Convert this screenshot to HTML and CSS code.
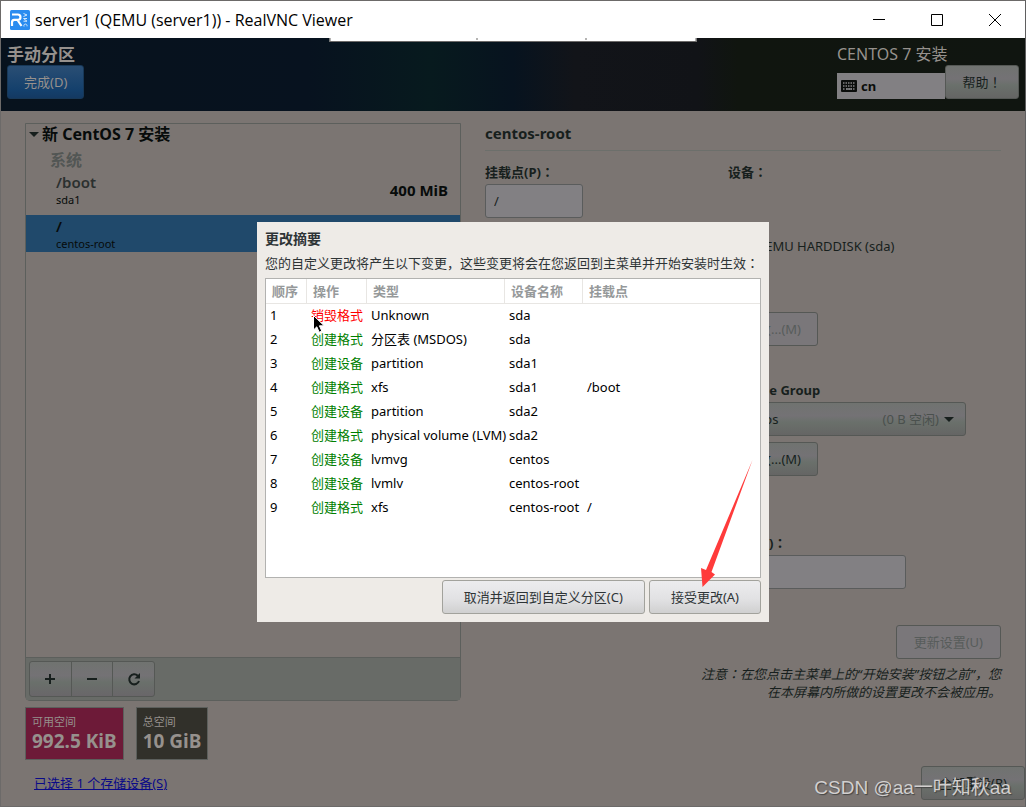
FILE: index.html
```html
<!DOCTYPE html>
<html lang="zh-CN">
<head>
<meta charset="utf-8">
<meta name="viewport" content="width=device-width, initial-scale=1">
<title>server1 (QEMU (server1)) - RealVNC Viewer</title>
<link rel="stylesheet" href="styles.css">
</head>
<body>
<div class="window">
  <header class="titlebar">
    <svg class="app-icon" viewBox="0 0 20 20" aria-hidden="true">
      <rect width="20" height="20" rx="1.5" fill="#2a8cf0"/>
      <path d="M2 4.500h5.800a2.600 2.600 0 0 1 0 5.300H4.200a2.500 2.500 0 0 0-2.200 2.500v3.700M7.500 10l4 6" fill="none" stroke="#fff" stroke-width="2.200"/>
      <path d="M13.500 3.500l3.500 1.500-3.500 1.500M17 8.500h-3.500l3.500 2.700h-3.500M14 16.500c-1-3 3.500-3.500 3-.2" fill="none" stroke="#d5e9fc" stroke-width="1"/>
    </svg>
    <span class="titlebar-text">server1 (QEMU (server1)) - RealVNC Viewer</span>
    <div class="window-controls">
      <button type="button" aria-label="最小化"><svg viewBox="0 0 12 12"><path d="M0 5.500h12"/></svg></button>
      <button type="button" aria-label="最大化"><svg viewBox="0 0 12 12"><path d="M.5.5h11v11H.5z"/></svg></button>
      <button type="button" aria-label="关闭"><svg viewBox="0 0 12 12"><path d="M0 0l12 12M12 0L0 12"/></svg></button>
    </div>
  </header>

  <div class="screen">
    <div class="viewer-tab" aria-hidden="true"><i></i><i></i><i></i></div>

    <div class="banner">
      <div class="banner-left">
        <h1>手动分区</h1>
        <button type="button" class="btn btn-blue">完成(D)</button>
      </div>
      <div class="banner-right">
        <p class="product">CENTOS 7 安装</p>
        <div class="banner-tools">
          <div class="keyboard">
            <svg viewBox="0 0 16 12" aria-hidden="true">
              <rect width="16" height="12" rx="1" fill="#0b0d0b"/>
              <path d="M2 3h12M2 6h12M2 9h2m1 0h6m1 0h2" stroke="#828083" stroke-width="1.500" fill="none" stroke-dasharray="1.500 1"/>
              <path d="M5 9h6" stroke="#828083" stroke-width="1.500"/>
            </svg>
            <span>cn</span>
          </div>
          <button type="button" class="btn btn-help">帮助<span class="mid" lang="zh-TW">！</span></button>
        </div>
      </div>
    </div>

    <main class="content">
      <section class="devices">
        <div class="device-box">
          <div class="device-list">
            <div class="group"><svg viewBox="0 0 10 5" aria-hidden="true"><path d="M0 0h10L5 5z"/></svg><span>新 CentOS 7 安装</span></div>
            <div class="subgroup">系统</div>
            <div class="device">
              <div><div class="device-mount">/boot</div><div class="device-name">sda1</div></div>
              <strong class="device-size">400 MiB</strong>
            </div>
            <div class="device device-selected">
              <div><div class="device-mount">/</div><div class="device-name">centos-root</div></div>
            </div>
          </div>
          <div class="device-toolbar">
            <div class="btn-group">
              <button type="button" aria-label="添加"><svg viewBox="0 0 14 14"><path d="M2 7h10M7 2v10"/></svg></button>
              <button type="button" aria-label="删除"><svg viewBox="0 0 14 14"><path d="M2 7h10"/></svg></button>
              <button type="button" aria-label="刷新"><svg viewBox="0 0 14 14"><path d="M10.800 3.800A5 5 0 1 0 12 9"/><path d="M13 1v5.500H7.500z" class="solid"/></svg></button>
            </div>
          </div>
        </div>
        <div class="tiles">
          <div class="tile tile-free"><span>可用空间</span><strong>992.5 KiB</strong></div>
          <div class="tile tile-total"><span>总空间</span><strong>10 GiB</strong></div>
        </div>
        <a class="storage-link" href="#">已选择 1 个存储设备(S)</a>
      </section>

      <section class="details">
        <h2>centos-root</h2>
        <div class="form">
          <div class="form-mount">
            <label for="mount">挂载点(P)<span class="mid" lang="zh-TW">：</span></label>
            <input id="mount" class="field field-mount" type="text" value="/">
          </div>
          <div class="form-device">
            <h3>设备<span class="mid" lang="zh-TW">：</span></h3>
            <p class="disk">&nbsp;&nbsp;&nbsp;&nbsp;&nbsp;&nbsp;&nbsp;&nbsp;QEMU HARDDISK (sda)</p>
            <button type="button" class="btn btn-flat btn-modify" disabled>修改...(M)</button>
            <label class="volume-label" for="vg">Volume Group</label>
            <div class="combo">
              <select id="vg" class="btn"><option>centos</option></select>
              <span class="combo-note">(0 B 空闲)</span>
              <svg viewBox="0 0 10 5" aria-hidden="true"><path d="M0 0h10L5 5z"/></svg>
            </div>
            <button type="button" class="btn btn-modify">修改...(M)</button>
            <label class="name-label" for="name">名称(N)<span class="mid" lang="zh-TW">：</span></label>
            <input id="name" class="field field-name" type="text">
          </div>
        </div>
        <div class="update">
          <button type="button" class="btn btn-flat" disabled>更新设置(U)</button>
          <p>注意<span class="mid" lang="zh-TW">：</span>在您点击主菜单上的“开始安装”按钮之前”，您<br>在本屏幕内所做的设置更改不会被应用。</p>
        </div>
      </section>
      <button type="button" class="btn btn-reset">全部重设(R)</button>
    </main>

    <div class="overlay">
      <div class="dialog" role="dialog" aria-labelledby="dialog-title">
        <h2 id="dialog-title">更改摘要</h2>
        <p>您的自定义更改将产生以下变更，这些变更将会在您返回到主菜单并开始安装时生效<span class="mid" lang="zh-TW">：</span></p>
        <div class="table-box">
          <table>
            <colgroup><col class="c-order"><col class="c-action"><col class="c-type"><col class="c-device"><col></colgroup>
            <thead><tr><th>顺序</th><th>操作</th><th>类型</th><th>设备名称</th><th>挂载点</th></tr></thead>
            <tbody>
              <tr><td>1</td><td class="destroy">销毁格式</td><td>Unknown</td><td>sda</td><td></td></tr>
              <tr><td>2</td><td class="create">创建格式</td><td>分区表 (MSDOS)</td><td>sda</td><td></td></tr>
              <tr><td>3</td><td class="create">创建设备</td><td>partition</td><td>sda1</td><td></td></tr>
              <tr><td>4</td><td class="create">创建格式</td><td>xfs</td><td>sda1</td><td>/boot</td></tr>
              <tr><td>5</td><td class="create">创建设备</td><td>partition</td><td>sda2</td><td></td></tr>
              <tr><td>6</td><td class="create">创建格式</td><td>physical volume (LVM)</td><td>sda2</td><td></td></tr>
              <tr><td>7</td><td class="create">创建设备</td><td>lvmvg</td><td>centos</td><td></td></tr>
              <tr><td>8</td><td class="create">创建设备</td><td>lvmlv</td><td>centos-root</td><td></td></tr>
              <tr><td>9</td><td class="create">创建格式</td><td>xfs</td><td>centos-root</td><td>/</td></tr>
            </tbody>
          </table>
        </div>
        <div class="dialog-actions">
          <button type="button" class="btn btn-light">取消并返回到自定义分区(C)</button>
          <button type="button" class="btn btn-light">接受更改(A)</button>
        </div>
        <svg class="pointer" viewBox="0 0 12 18" aria-hidden="true"><path d="M.5.5v14.500l3.300-3.200 2.400 5.400 2.600-1.100-2.400-5.300h4.800z" fill="#000" stroke="#fff" stroke-width="1"/></svg>
        <svg class="arrow" viewBox="0 0 54 130" aria-hidden="true"><path d="M52.500 2L6 112l-5-2 1.500 19L15 116.500l-3.500-2.500z" fill="#ff3b3b"/></svg>
      </div>
    </div>
    <div class="watermark">CSDN @aa一叶知秋aa</div>
  </div>
</div>
</body>
</html>
```

FILE: styles.css
```css
* { box-sizing: border-box; }

body {
  margin: 0;
  font: 13px/18px "Noto Sans", "Noto Sans CJK SC", sans-serif;
  color: #171f1d;
}

h1, h2, h3, p { margin: 0; }

button, input, select { font: inherit; color: inherit; }

/* Full-width punctuation centred in its cell */
.mid { font-family: "Noto Sans CJK TC", sans-serif; line-height: 1; }

.window {
  display: flex;
  flex-direction: column;
  min-height: 100vh;
  border: 1px solid #6c6a69;
  border-right-color: #5f5f60;
}

/* Title bar */
.titlebar {
  display: flex;
  align-items: center;
  gap: 5px;
  height: 37px;
  padding: 0 1px 0 9px;
  background: #fff;
  color: #000;
}
.app-icon { width: 20px; height: 20px; }
.titlebar-text { flex: 1; font: 16px/20px "Open Sans", sans-serif; }
.window-controls { display: flex; height: 100%; }
.window-controls button {
  display: grid;
  place-items: center;
  width: 58px;
  padding: 0;
  border: 0;
  background: none;
}
.window-controls svg {
  width: 12px;
  height: 12px;
  fill: none;
  stroke: #000;
  stroke-width: 1;
}

.screen {
  position: relative;
  display: flex;
  flex: 1;
  flex-direction: column;
  background: #7b7572;
}

.viewer-tab {
  position: absolute;
  top: 0;
  left: 50%;
  display: grid;
  grid-template-columns: 146fr 110fr 110fr;
  width: 367px;
  height: 4px;
  transform: translateX(-50%);
  border: 1px solid #6c6a69;
  border-top: 0;
  background: #fff;
}
.viewer-tab i + i { height: 2px; border-left: 1px solid #6c6a69; }

/* Banner */
.banner {
  display: flex;
  justify-content: space-between;
  height: 73px;
  padding: 6px 6px 0;
  background: linear-gradient(90deg, #07121d 0%, #07121f 30%, #071a1e 42%, #07131f 50%, #121419 56%, #111317 68%, #10150f 72%, #101510 100%);
  color: #96918d;
}
.banner h1 { font-size: 17px; line-height: 21px; }
.banner-right { width: 182px; }
.product { font-size: 16px; line-height: 21px; }
.banner-tools { display: flex; align-items: flex-end; }
.keyboard {
  display: flex;
  flex: 1;
  align-items: center;
  gap: 4px;
  height: 26px;
  padding-left: 4px;
  background: #828083;
  color: #0b0d0b;
  font-weight: 700;
}
.keyboard svg { width: 16px; height: 12px; }

/* Buttons and fields */
.btn {
  height: 34px;
  padding: 0 16px;
  border: 1px solid #555855;
  border-radius: 3px;
  background: linear-gradient(#707370, #747275 40%, #6a706b 60%, #656564);
  color: #171f1d;
}
.btn-blue {
  border-color: #173858;
  background: linear-gradient(#2a4e74, #14406c 75%, #143962);
  color: #96918d;
}
.btn-help { width: 74px; padding: 0; }
.btn-flat { padding: 0 17px; background: #7a777a; color: #575c5a; }
.btn-modify { width: 90px; padding: 0; }
.btn-light {
  border-color: #a2a29c;
  background: linear-gradient(#ececee, #e2e2e4 55%, #d0d0d0);
  color: #2e3436;
  padding: 0 21px;
}
.field {
  height: 34px;
  padding: 0 8px;
  border: 1px solid #5a5c5c;
  border-radius: 3px;
  background: #828083;
}

/* Main area */
.content {
  display: grid;
  grid-template-columns: 436fr 516fr;
  gap: 24px;
  flex: 1;
  padding: 12px 24px 0;
}
.devices { display: flex; flex-direction: column; }
.device-box {
  display: flex;
  flex: 1;
  flex-direction: column;
  border: 1px solid #5c5f5c;
  border-radius: 0 0 5px 5px;
}
.device-list { flex: 1; color: #070b0a; font-size: 15px; }
.group {
  display: flex;
  align-items: center;
  gap: 3px;
  padding-left: 3px;
  font-weight: 700;
  font-size: 16px;
  line-height: 20px;
}
.group svg, .combo svg { width: 10px; height: 5px; fill: #171f1d; }
.subgroup { padding: 6px 24px 0; color: #525654; font-weight: 700; font-size: 16px; line-height: 20px; }
.device {
  display: flex;
  align-items: center;
  justify-content: space-between;
  height: 45px;
  padding: 0 12px 6px 30px;
}
.device-mount { color: #2b302f; font-weight: 600; line-height: 20px; }
.device-name { font-size: 11px; line-height: 16px; }
.device-size { line-height: 20px; }
.device-selected { height: 37px; padding-bottom: 0; background: #20496b; }
.device-selected .device-mount { color: #070b0a; }
.device-toolbar {
  padding: 3px;
  height: 43px;
  border-top: 1px solid #5c5f5c;
  background: #686b67;
}
.btn-group {
  display: flex;
  width: 126px;
  height: 36px;
  border: 1px solid #555855;
  border-radius: 3px;
  background: linear-gradient(#707370, #747275 40%, #6a706b 60%, #696669);
}
.btn-group button {
  display: grid;
  flex: 1;
  place-items: center;
  padding: 0;
  border: 0;
  background: none;
}
.btn-group button + button { border-left: 1px solid #555855; }
.btn-group svg { width: 14px; height: 14px; fill: none; stroke: #171f1d; stroke-width: 2; }
.btn-group .solid { fill: #171f1d; stroke: none; }

.tiles { display: flex; gap: 12px; margin-top: 6px; }
.tile {
  display: flex;
  flex-direction: column;
  height: 53px;
  padding: 5px 6px;
  border: 1px solid #5c5f5c;
  color: #96918d;
}
.tile span { font-size: 11px; line-height: 18px; }
.tile strong { font-size: 19px; line-height: 20px; }
.tile-free { background: #6d1a38; }
.tile-total { background: #31302a; }
.storage-link {
  align-self: flex-start;
  margin: 14px 0 14px 9px;
  color: #0a0a88;
  line-height: 18px;
}

/* Details form */
.details h2 {
  padding-bottom: 7px;
  border-bottom: 1px solid #6c6f6b;
  font-size: 15px;
  line-height: 20px;
}
.form { display: grid; grid-template-columns: 243fr 273fr; margin-top: 11px; }
.form label, .form h3 {
  display: block;
  font-size: 13px;
  font-weight: 700;
  line-height: 20px;
}
.form-mount label { margin-bottom: 2px; }
.field-mount { width: 98px; }
.form-device { display: flex; flex-direction: column; align-items: flex-start; }
.disk { margin: 55px 0 57px; line-height: 18px; white-space: nowrap; }
.form .volume-label { margin: 34px 0 2px; }
.combo { display: grid; width: 238px; align-items: center; margin-bottom: 6px; }
.combo > * { grid-area: 1 / 1; }
.combo select { width: 100%; padding: 0 9px; appearance: none; }
.combo-note { justify-self: end; margin-right: 27px; color: #4a504d; pointer-events: none; }
.combo svg { justify-self: end; margin-right: 12px; pointer-events: none; }
.form .name-label { margin: 57px 0 2px; }
.field-name { width: 178px; }
.update {
  display: flex;
  flex-direction: column;
  align-items: flex-end;
  gap: 6px;
  margin-top: 36px;
  text-align: right;
  font-style: italic;
}
.update .btn { font-style: normal; }

.btn-reset {
  position: absolute;
  right: 0;
  bottom: 6px;
  width: 104px;
}

/* Summary dialog */
.overlay {
  position: absolute;
  inset: 0;
  display: grid;
  place-items: center;
}
.dialog {
  position: relative;
  width: 512px;
  padding: 8px;
  background: #eeebe7;
  color: #2e3436;
}
.dialog h2 { font-size: 14px; line-height: 18px; }
.dialog p { padding: 6px 0; line-height: 18px; white-space: nowrap; }
.table-box {
  height: 300px;
  border: 1px solid #b2b2b0;
  background: #fff;
}
table { width: 100%; table-layout: fixed; border-spacing: 0; }
.c-order { width: 41px; }
.c-action { width: 60px; }
.c-type { width: 138px; }
.c-device { width: 78px; }
th, td { height: 24px; text-align: left; white-space: nowrap; }
th {
  height: 25px;
  padding: 0 6px;
  border-bottom: 1px solid #e8e6e3;
  border-right: 1px solid #e8e6e3;
  color: #96999a;
}
th:last-child { border-right: 0; }
td { padding: 0 4px; color: #000; line-height: 22px; padding-bottom: 2px; }
.destroy { color: #f00; }
.create { color: #008000; }
.dialog-actions { display: flex; justify-content: flex-end; gap: 4px; margin-top: 2px; }

.pointer { position: absolute; top: 93px; left: 56px; width: 12px; height: 18px; }
.arrow { position: absolute; right: 15px; top: 236px; width: 54px; height: 130px; }

.watermark {
  position: absolute;
  right: 14px;
  bottom: 5px;
  color: #d2d0cf;
  font: 19px/26px "Liberation Sans", "Noto Sans CJK SC", sans-serif;
  text-shadow: 1px 1px 1px #444;
  pointer-events: none;
}
```
